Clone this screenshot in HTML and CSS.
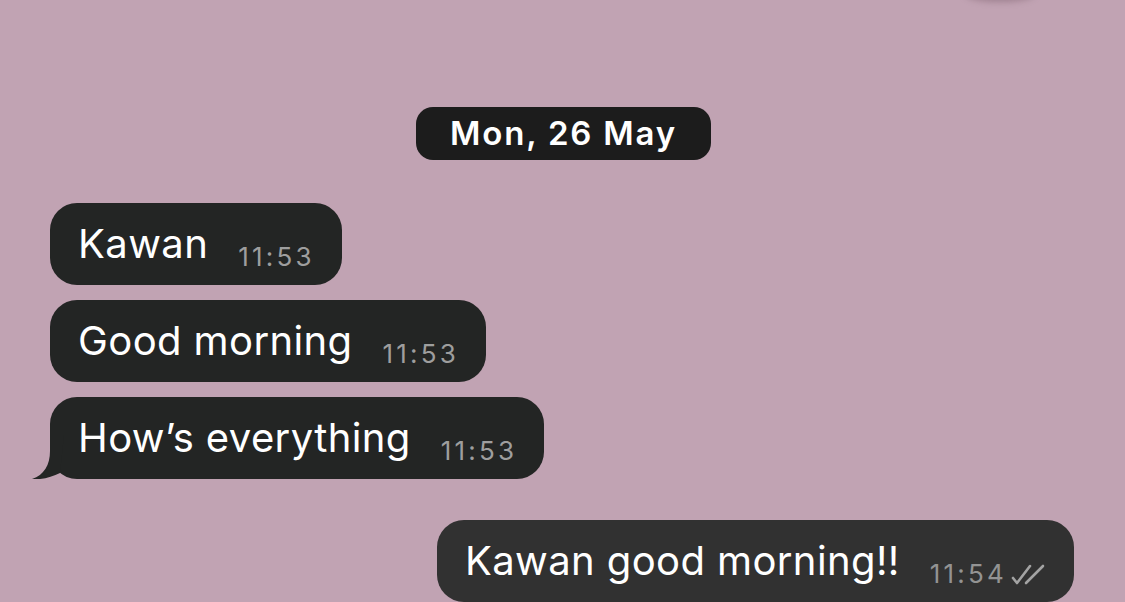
FILE: index.html
```html
<!DOCTYPE html>
<html>
<head>
<meta charset="utf-8">
<link rel="stylesheet" href="styles.css">
</head>
<body>
<div class="chat">
  <div class="top-shadow"></div>
  <div class="date-row"><span class="date-pill">Mon, 26 May</span></div>
  <div class="group in">
    <div class="bubble"><span class="text">Kawan</span><span class="time">11:53</span></div>
    <div class="bubble"><span class="text">Good morning</span><span class="time">11:53</span></div>
    <div class="bubble last"><span class="text">How’s everything</span><span class="time">11:53</span>
      <svg class="tail" width="34" height="44" viewBox="0 0 34 44"><path d="M18 0 L18 16 C18 30 12 40 0 44 C10 45 20 42 28 38 L32 0 Z" fill="#232524"/></svg>
    </div>
  </div>
  <div class="group out">
    <div class="bubble"><span class="text">Kawan good morning!!</span><span class="time">11:54</span>
      <svg class="ticks" width="36" height="24" viewBox="0 0 36 24"><path d="M3 15 L7 20 L20 3" fill="none" stroke="#a3a3a3" stroke-width="2.6" stroke-linecap="round" stroke-linejoin="round"/><path d="M16 20 L33 3" fill="none" stroke="#a3a3a3" stroke-width="2.6" stroke-linecap="round"/></svg>
    </div>
  </div>
</div>
</body>
</html>
```
FILE: styles.css
```css
* { box-sizing: border-box; }
html, body { margin: 0; padding: 0; }
body {
  width: 1125px;
  height: 602px;
  overflow: hidden;
  background: #c1a3b3;
  font-family: Inter, "Liberation Sans", sans-serif;
}
.chat {
  position: relative;
  display: flex;
  flex-direction: column;
  padding-top: 107px;
}
.top-shadow {
  position: absolute;
  top: -14px;
  left: 965px;
  width: 70px;
  height: 16px;
  border-radius: 50%;
  background: rgba(120, 90, 105, 0.45);
  filter: blur(3px);
}
.date-row {
  display: flex;
  justify-content: center;
  padding-left: 2px;
}
.date-pill {
  background: #1c1c1c;
  color: #fff;
  font-size: 33px;
  font-weight: 600;
  height: 53px;
  line-height: 53px;
  padding: 0 34px 0 34px;
  border-radius: 17px;
  letter-spacing: 1.8px;
}
.group {
  display: flex;
  flex-direction: column;
  gap: 15px;
}
.group.in {
  margin-top: 43px;
  padding-left: 50px;
  align-items: flex-start;
}
.group.out {
  margin-top: 41px;
  padding-right: 51px;
  align-items: flex-end;
}
.bubble {
  position: relative;
  display: flex;
  align-items: baseline;
  height: 82px;
  padding: 0 30px 0 28px;
  border-radius: 27px;
  background: #232524;
  color: #fff;
}
.out .bubble {
  background: #313131;
  padding-right: 28px;
}
.text {
  position: relative;
  z-index: 1;
  font-size: 40px;
  line-height: 82px;
  letter-spacing: 0.4px;
}
.time {
  font-size: 26px;
  color: #9e9e9e;
  margin-left: 30px;
  position: relative;
  top: 8px;
  letter-spacing: 3.2px;
  margin-right: -3px;
}
.out .time {
  margin-left: 30px;
  color: #939393;
}
.tail {
  position: absolute;
  left: -18px;
  bottom: 0;
}
.ticks {
  align-self: center;
  margin-left: 6px;
  position: relative;
  top: 14px;
}
```
